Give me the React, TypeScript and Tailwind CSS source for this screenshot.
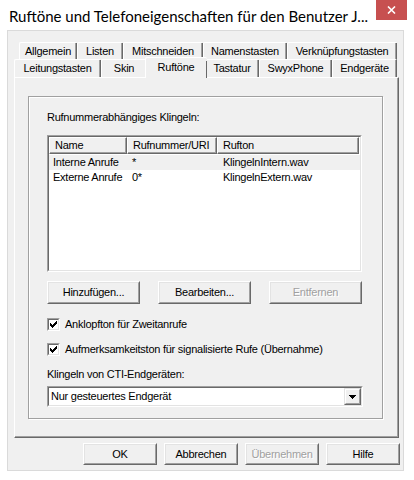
import React from "react";

const backTabs = [
  { label: "Allgemein", w: "w-[58px]" },
  { label: "Listen", w: "w-[46px]" },
  { label: "Mitschneiden", w: "w-[80px]" },
  { label: "Namenstasten", w: "w-[84px]" },
  { label: "Verknüpfungstasten", w: "w-[110px]" },
];

const frontTabs = [
  { label: "Leitungstasten", w: "w-[87px]" },
  { label: "Skin", w: "w-[46px]" },
  { label: "Ruftöne", w: "w-[62px]", active: true },
  { label: "Tastatur", w: "w-[54px]" },
  { label: "SwyxPhone", w: "w-[73px]" },
  { label: "Endgeräte", w: "w-[65px]" },
];

const rings = [
  { name: "Interne Anrufe", number: "*", file: "KlingelnIntern.wav", selected: true },
  { name: "Externe Anrufe", number: "0*", file: "KlingelnExtern.wav" },
];

function Tab({ label, w, active }: { label: string; w: string; active?: boolean }) {
  if (active) {
    return (
      <div
        className={`${w} relative z-10 -mx-[2px] -mb-[1px] flex h-[21px] items-start justify-center rounded-t-[2px] border-l border-t border-white bg-[#f0f0f0] pt-[3px]`}
      >
        <div className="flex h-full w-full justify-center border-r border-r-[#696969]">
          <span className="leading-[13px]">{label}</span>
        </div>
      </div>
    );
  }
  return (
    <div className={`${w} flex h-[18px] rounded-t-[2px] border-l border-t border-white`}>
      <div className="flex h-full w-full items-center justify-center border-r border-r-[#696969] shadow-[inset_-1px_0_0_#a0a0a0]">
        <span className="leading-[13px]">{label}</span>
      </div>
    </div>
  );
}

function Button({ label, w, disabled, h = "h-[23px]" }: { label: string; w: string; disabled?: boolean; h?: string }) {
  return (
    <div className={`${w} ${h} border-l border-t border-white border-b-[#696969] border-r-[#696969] border-b border-r`}>
      <div className="flex h-full w-full items-center justify-center border-b border-r border-b-[#a0a0a0] border-r-[#a0a0a0] border-l border-t border-l-[#e3e3e3] border-t-[#e3e3e3] bg-[#f0f0f0]">
        <span className={disabled ? "text-[#a0a0a0] [text-shadow:1px_1px_0_#fff]" : "text-black"}>{label}</span>
      </div>
    </div>
  );
}

function CheckBox({ label }: { label: string }) {
  return (
    <div className="flex h-[13px] items-center gap-[5px]">
      <div className="h-[13px] w-[13px] border-l border-t border-b border-r border-l-[#a0a0a0] border-t-[#a0a0a0] border-b-white border-r-white">
        <div className="flex h-full w-full items-center justify-center border-l border-t border-b border-r border-l-[#696969] border-t-[#696969] border-b-[#e3e3e3] border-r-[#e3e3e3] bg-white">
          <svg width="7" height="7" viewBox="0 0 7 7" shapeRendering="crispEdges">
            <path d="M0 2h1v3h-1z M1 3h1v3h-1z M2 4h1v3h-1z M3 3h1v3h-1z M4 2h1v3h-1z M5 1h1v3h-1z M6 0h1v3h-1z" fill="#000" />
          </svg>
        </div>
      </div>
      <span className="leading-[13px]">{label}</span>
    </div>
  );
}

export default function App() {
  return (
    <div className="h-[480px] w-[414px] overflow-hidden bg-white text-[11px] tracking-[-0.25px] text-black [font-family:'Liberation_Sans',Arial,sans-serif]">
      {/* title bar */}
      <div className="flex h-[30px] items-start">
        <span className="whitespace-nowrap pl-[9px] pt-[6px] text-[15px] leading-[20px] tracking-normal text-[#000] [font-family:Lato,sans-serif]">
          Ruftöne und Telefoneigenschaften für den Benutzer J...
        </span>
        <div className="ml-auto mr-[7px] flex h-[20px] w-[31px] shrink-0 items-center justify-center bg-[#c75050]">
          <svg width="9" height="8" viewBox="0 0 9 8">
            <path d="M1 0.5 L8 7.5 M8 0.5 L1 7.5" stroke="#fff" strokeWidth="1.6" />
          </svg>
        </div>
      </div>

      {/* client area */}
      <div className="ml-[7px] h-[441px] w-[397px] border border-[#dadada] bg-[#f0f0f0]">
        <div className="flex pl-[11px] pt-[11px]">
          {backTabs.map((t) => (
            <Tab key={t.label} {...t} />
          ))}
        </div>
        <div className="-mt-[3px] flex h-[20px] items-end pl-[6px]">
          {frontTabs.map((t) => (
            <Tab key={t.label} {...t} />
          ))}
        </div>

        {/* tab page */}
        <div className="ml-[6px] h-[361px] w-[385px] border-l border-t border-r border-b border-l-white border-t-white border-r-[#696969] border-b-[#696969]">
          <div className="h-full w-full border-r border-b border-r-[#a0a0a0] border-b-[#a0a0a0] pl-[13px] pt-[18px]">
            <div className="h-[323px] w-[355px] border border-[#a0a0a0] shadow-[inset_1px_1px_0_#fff,1px_1px_0_#fff]">
              <div className="flex flex-col pl-[18px] pt-[14px]">
                <span className="leading-[13px]">Rufnummerabhängiges Klingeln:</span>

                {/* ring list */}
                <div className="mt-[11px] h-[137px] w-[315px] border-l border-t border-b border-r border-l-[#a0a0a0] border-t-[#a0a0a0] border-b-white border-r-white">
                  <div className="h-full w-full border-l border-t border-b border-r border-l-[#696969] border-t-[#696969] border-b-[#e3e3e3] border-r-[#e3e3e3] bg-white">
                    <div className="flex h-[17px]">
                      {[
                        ["Name", "w-[78px]"],
                        ["Rufnummer/URI", "w-[90px]"],
                        ["Rufton", "w-[142px]"],
                      ].map(([h, w]) => (
                        <div key={h} className={`${w} h-full border-l border-t border-l-white border-t-white border-r border-b border-r-[#696969] border-b-[#696969] bg-[#f0f0f0]`}>
                          <div className="flex h-full items-center border-r border-b border-r-[#a0a0a0] border-b-[#a0a0a0] pl-[5px]">
                            {h}
                          </div>
                        </div>
                      ))}
                    </div>
                    <div className="pt-px">
                      {rings.map((r) => (
                        <div key={r.name} className={`flex h-[15px] items-center ${r.selected ? "bg-[#f0f0f0]" : ""}`}>
                          <span className="w-[78px] pl-[4px]">{r.name}</span>
                          <span className="w-[90px] pl-[5px]">{r.number}</span>
                          <span className="pl-[6px]">{r.file}</span>
                        </div>
                      ))}
                    </div>
                  </div>
                </div>

                <div className="mt-[9px] flex w-[315px] justify-between">
                  <Button label="Hinzufügen..." w="w-[93px]" />
                  <Button label="Bearbeiten..." w="w-[93px]" />
                  <Button label="Entfernen" w="w-[93px]" disabled />
                </div>

                <div className="mt-[14px]">
                  <CheckBox label="Anklopfton für Zweitanrufe" />
                </div>
                <div className="mt-[12px]">
                  <CheckBox label="Aufmerksamkeitston für signalisierte Rufe (Übernahme)" />
                </div>

                <span className="mt-[12px] leading-[13px]">Klingeln von CTI-Endgeräten:</span>

                {/* combo box */}
                <div className="mt-[5px] h-[21px] w-[316px] border-l border-t border-b border-r border-l-[#a0a0a0] border-t-[#a0a0a0] border-b-white border-r-white">
                  <div className="flex h-full w-full items-center border-l border-t border-b border-r border-l-[#696969] border-t-[#696969] border-b-[#e3e3e3] border-r-[#e3e3e3] bg-white">
                    <span className="pl-[2px]">Nur gesteuertes Endgerät</span>
                    <div className="ml-auto h-[17px] w-[17px] border-l border-t border-b border-r border-l-[#e3e3e3] border-t-[#e3e3e3] border-b-[#696969] border-r-[#696969]">
                      <div className="flex h-full w-full items-center justify-center border-l border-t border-b border-r border-l-white border-t-white border-b-[#a0a0a0] border-r-[#a0a0a0] bg-[#f0f0f0]">
                        <svg width="7" height="4" viewBox="0 0 7 4" shapeRendering="crispEdges">
                          <path d="M0 0h7v1h-7z M1 1h5v1h-5z M2 2h3v1h-3z M3 3h1v1h-1z" fill="#000" />
                        </svg>
                      </div>
                    </div>
                  </div>
                </div>
              </div>
            </div>
          </div>
        </div>

        {/* dialog buttons */}
        <div className="mt-[5px] flex gap-[7px] pl-[75px]">
          <Button label="OK" w="w-[74px]" h="h-[22px]" />
          <Button label="Abbrechen" w="w-[74px]" h="h-[22px]" />
          <Button label="Übernehmen" w="w-[74px]" h="h-[22px]" disabled />
          <Button label="Hilfe" w="w-[74px]" h="h-[22px]" />
        </div>
      </div>
    </div>
  );
}
